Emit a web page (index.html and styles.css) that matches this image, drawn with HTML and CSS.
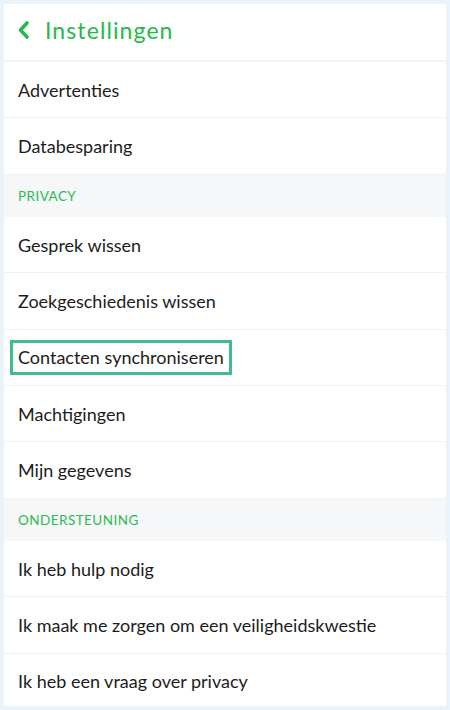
FILE: index.html
```html
<!DOCTYPE html>
<html lang="nl">
<head>
<meta charset="utf-8">
<link rel="stylesheet" href="styles.css">
</head>
<body>
<div class="panel">
  <header class="header">
    <svg class="back" width="14" height="20" viewBox="0 0 14 20"><path d="M10 3 L3.5 10 L10 17" fill="none" stroke="#26b84b" stroke-width="3.6" stroke-linecap="round" stroke-linejoin="round"/></svg>
    <h1 class="title">Instellingen</h1>
  </header>
  <ul class="list">
    <li class="row">Advertenties</li>
    <li class="row">Databesparing</li>
    <li class="section">PRIVACY</li>
    <li class="row">Gesprek wissen</li>
    <li class="row">Zoekgeschiedenis wissen</li>
    <li class="row"><span class="highlight">Contacten synchroniseren</span></li>
    <li class="row">Machtigingen</li>
    <li class="row">Mijn gegevens</li>
    <li class="section">ONDERSTEUNING</li>
    <li class="row">Ik heb hulp nodig</li>
    <li class="row">Ik maak me zorgen om een veiligheidskwestie</li>
    <li class="row">Ik heb een vraag over privacy</li>
  </ul>
</div>
</body>
</html>
```
FILE: styles.css
```css
html, body {
  margin: 0;
  padding: 0;
  height: 710px;
  overflow: hidden;
}
body {
  background: #eaf3f9;
  font-family: Lato, "Noto Sans", sans-serif;
  padding: 4px;
  box-sizing: border-box;
}
.panel {
  background: #fff;
  height: 702px;
  overflow: hidden;
}
.header {
  height: 58px;
  box-sizing: border-box;
  display: flex;
  align-items: center;
  padding: 0 0 4px 13px;
  gap: 14px;
  border-bottom: 2px solid #f3f4f6;
}
.back {
  display: block;
}
.title {
  margin: 0;
  font-size: 23px;
  font-weight: 400;
  color: #26b84b;
  letter-spacing: 1.1px;
}
.list {
  list-style: none;
  margin: 0;
  padding: 0;
}
.row {
  height: 56.3px;
  box-sizing: border-box;
  display: flex;
  align-items: center;
  padding-left: 14px;
  font-size: 18px;
  color: #1c1c1c;
  border-bottom: 1px solid #f0f1f3;
}
.section {
  height: 42.5px;
  box-sizing: border-box;
  display: flex;
  align-items: center;
  padding-left: 14px;
  background: #f5f7f9;
  font-size: 13.5px;
  color: #2cba52;
  letter-spacing: 0.45px;
}
.highlight {
  display: inline-block;
  border: 3px solid #3fbd8e;
  padding: 3px 5px;
  margin-left: -8px;
  line-height: 23px;
}
```
